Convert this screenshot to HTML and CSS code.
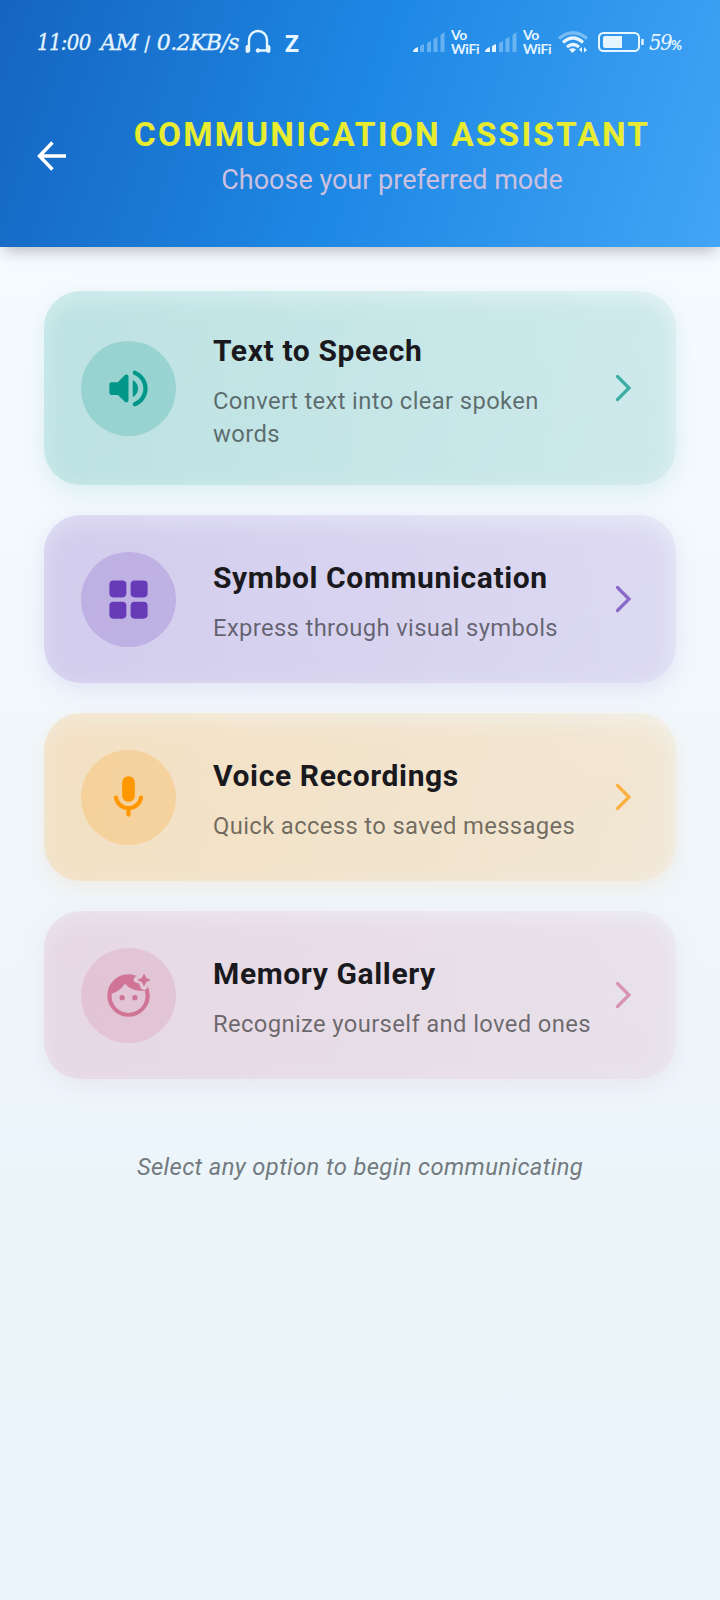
FILE: index.html
```html
<!DOCTYPE html>
<html lang="en">
<head>
<meta charset="utf-8">
<title>Communication Assistant</title>
<link rel="stylesheet" href="styles.css">
</head>
<body>
<header class="header">
  <div class="status">
    <span class="clock">11:00<span class="ampm">AM <i class="divider">|</i> 0.2KB/s</span></span>
    <svg class="headset" viewBox="0 0 26 26" width="26" height="26" fill="none" stroke="currentColor" stroke-width="2.400" stroke-linecap="round"><path d="M4 23V12a9 9 0 0 1 18 0v11M13 22.500h8"/><path d="M2.500 19v4M23.500 19v4" stroke-width="3.800"/><circle cx="13" cy="22.500" r="1.800" fill="currentColor" stroke-width="1"/></svg>
    <span class="zed">Z</span>
    <span class="spacer"></span>
    <svg class="signal" viewBox="0 0 32 22" width="32" height="22" fill="currentColor"><path d="M0 21q0-3 5-5v5z"/><g opacity=".35"><path d="M7 15l4-2v8H7zM14 12l4-2v11h-4zM20.500 8l4-2v15h-4zM27.500 4l4-3v20h-4z"/></g></svg>
    <span class="vowifi"><span>Vo</span><span>WiFi</span></span>
    <svg class="signal second" viewBox="0 0 32 22" width="32" height="22" fill="currentColor"><path d="M0 21q0-3 5-5v5zM7 15l4-2v8H7z"/><g opacity=".35"><path d="M14 12l4-2v11h-4zM20.500 8l4-2v15h-4zM27.500 4l4-3v20h-4z"/></g></svg>
    <span class="vowifi"><span>Vo</span><span>WiFi</span></span>
    <svg class="wifi" viewBox="0 0 32 24" width="32" height="24" fill="none" stroke="currentColor" stroke-width="3.200"><path d="M2 8.500Q16-3 30 8.500" opacity=".4"/><path d="M6 12.500Q16 3.500 26 12.500M10 17q6-5 12 0"/><path d="M12 19.500q4-2.500 7 0L15.500 23z" fill="currentColor" stroke="none"/><path d="M25 17v5.500l-3-3zM27 22.500V17l3 3z" fill="currentColor" stroke="none"/></svg>
    <svg class="battery" viewBox="0 0 46 20" width="46" height="20" fill="none" stroke="currentColor" stroke-width="2"><rect x="1" y="1" width="40" height="18" rx="4.500"/><path d="M7 4h17v12H7a2 2 0 0 1-2-2V6a2 2 0 0 1 2-2z" fill="currentColor" stroke="none"/><path d="M44.500 7v6" stroke-width="2.500"/></svg>
    <span class="level">59<small>%</small></span>
  </div>
  <div class="bar">
    <svg class="back" viewBox="0 0 30 30" width="30" height="30" fill="none" stroke="currentColor" stroke-width="3.400"><path d="M29 15H3M15.500 1.500L2.500 15l13 13.500"/></svg>
    <div class="heading">
      <h1>COMMUNICATION ASSISTANT</h1>
      <p>Choose your preferred mode</p>
    </div>
  </div>
</header>
<main class="content">
  <section class="card teal">
    <div class="badge"><svg viewBox="0 0 24 24" width="51" height="51" fill="currentColor"><path d="M3 10v4c0 .55.45 1 1 1h3l3.290 3.290c.63.63 1.710.18 1.710-.71V6.410c0-.89-1.080-1.340-1.710-.71L7 9H4c-.55 0-1 .45-1 1zm13.500 2c0-1.770-1.020-3.290-2.500-4.030v8.050c1.480-.73 2.500-2.250 2.500-4.020zM14 4.450v.2c0 .38.25.71.6.85C17.180 6.530 19 9.060 19 12s-1.820 5.470-4.400 6.500c-.36.14-.6.47-.6.85v.2c0 .63.63 1.070 1.210.85C18.600 19.110 21 15.840 21 12s-2.400-7.110-5.790-8.400c-.58-.23-1.210.22-1.210.85z"/></svg></div>
    <div class="text"><h2>Text to Speech</h2><p>Convert text into clear spoken words</p></div>
    <svg class="chevron" viewBox="0 0 17 28" width="17" height="28"><path d="M2.500 2.500L14 14 2.500 25.500"/></svg>
  </section>
  <section class="card purple">
    <div class="badge"><svg viewBox="0 0 24 24" width="51" height="51" fill="currentColor"><rect x="3" y="3" width="8" height="8" rx="1.900"/><rect x="13" y="3" width="8" height="8" rx="1.900"/><rect x="3" y="13" width="8" height="8" rx="1.900"/><rect x="13" y="13" width="8" height="8" rx="1.900"/></svg></div>
    <div class="text"><h2>Symbol Communication</h2><p>Express through visual symbols</p></div>
    <svg class="chevron" viewBox="0 0 17 28" width="17" height="28"><path d="M2.500 2.500L14 14 2.500 25.500"/></svg>
  </section>
  <section class="card orange">
    <div class="badge"><svg viewBox="0 0 24 24" width="51" height="51" fill="currentColor"><path d="M12 14c1.660 0 3-1.340 3-3V5c0-1.660-1.340-3-3-3S9 3.340 9 5v6c0 1.660 1.340 3 3 3zm5.910-3c-.49 0-.9.36-.98.85C16.520 14.200 14.470 16 12 16s-4.520-1.800-4.930-4.150c-.08-.49-.49-.85-.98-.85-.61 0-1.090.54-1 1.140.49 3 2.890 5.350 5.910 5.780V20c0 .55.45 1 1 1s1-.45 1-1v-2.080c3.020-.43 5.420-2.780 5.910-5.780.1-.6-.39-1.140-1-1.140z"/></svg></div>
    <div class="text"><h2>Voice Recordings</h2><p>Quick access to saved messages</p></div>
    <svg class="chevron" viewBox="0 0 17 28" width="17" height="28"><path d="M2.500 2.500L14 14 2.500 25.500"/></svg>
  </section>
  <section class="card pink">
    <div class="badge"><svg viewBox="0 0 24 24" width="51" height="51" fill="currentColor">
      <mask id="sparkle-gap"><path d="M0 0h24v24H0z" fill="#fff"/><path d="M19.300 0l1.500 3 4 1.700-3.200 1.500-.7 2.300-1.500 1.200-1.600-1-.8-2.300-2.200-.8-.5-1.200.8-1.200 2-.9z" fill="#000"/></mask>
      <path mask="url(#sparkle-gap)" fill-rule="evenodd" d="M12 2a10 10 0 1 0 0 20 10 10 0 0 0 0-20zM4.100 11.200C7 10.300 9.100 8.500 10.300 6.400 12.300 8.800 15.200 10 19.700 9.900A8 8 0 1 1 4.100 11.200z"/>
      <circle cx="9" cy="13" r="1.250"/><circle cx="15" cy="13" r="1.250"/>
      <path stroke="currentColor" stroke-width=".4" stroke-linejoin="round" d="M19.300 2l.9 1.900 1.900.8-1.900.8-.9 1.900-.9-1.900-1.900-.8 1.900-.8z"/></svg></div>
    <div class="text"><h2>Memory Gallery</h2><p>Recognize yourself and loved ones</p></div>
    <svg class="chevron" viewBox="0 0 17 28" width="17" height="28"><path d="M2.500 2.500L14 14 2.500 25.500"/></svg>
  </section>
  <p class="hint">Select any option to begin communicating</p>
</main>
</body>
</html>
```
FILE: styles.css
```css
* { box-sizing: border-box; margin: 0; }
body {
  min-height: 1600px;
  font-family: Roboto, sans-serif;
  background: linear-gradient(#f8fcff, #edf5fb 68%, #e8f4f8 80%, #e8f4f9);
  overflow: hidden;
}
.header {
  position: relative;
  height: 247px;
  color: #fff;
  background: linear-gradient(108.9deg, #1565c0, #1e88e5 50%, #42a5f5);
  box-shadow: 0 8px 14px -4px rgba(0, 0, 0, .25);
}
.status {
  display: flex;
  align-items: center;
  height: 84px;
  padding: 0 36px 0 37px;
  color: #e6f5ff;
}
.clock, .level { font-family: "DejaVu Serif Condensed", "DejaVu Serif", serif; font-style: italic; white-space: nowrap; }
.clock { width: 208px; font-size: 22px; letter-spacing: -.7px; -webkit-text-stroke: .3px; }
.ampm { margin-left: 10px; font-family: "DejaVu Serif", serif; letter-spacing: -.6px; }
.divider { display: inline-block; font: 20px Roboto, sans-serif; transform: skewX(-14deg); margin: 0 1px; }
.headset { margin-top: -2px; }
.zed { margin-left: 14px; font: 700 24px "Open Sans", sans-serif; }
.spacer { flex: 1; }
.vowifi {
  display: flex;
  flex-direction: column;
  width: 29px;
  margin-left: 6px;
  font: 700 14px/14px Lato, sans-serif;
  letter-spacing: -.3px;
  white-space: nowrap;
}
.second { margin-left: 5px; }
.wifi { margin-left: 5px; }
.battery { margin-left: 9px; }
.level { width: 35px; margin-left: 5px; font-size: 22px; letter-spacing: -1.500px; }
.level small { font: 700 13px Lato, sans-serif; letter-spacing: 0; }
.bar { display: flex; align-items: flex-start; padding: 0 36px 0 37px; }
.back { flex: none; margin-top: 57px; }
.heading { flex: 1; margin-top: 31px; text-align: center; padding-left: 33px; }
.heading h1 { font-size: 33.500px; line-height: 40px; font-weight: 700; letter-spacing: 2.150px; color: #e8ec30; white-space: nowrap; }
.heading p { margin-top: 7px; font-size: 27px; line-height: 36px; color: #ccc0e0; }
.content { display: flex; flex-direction: column; gap: 30px; padding: 44px; }
.card {
  position: relative;
  display: flex;
  align-items: center;
  height: 168px;
  padding: 0 44.500px 0 37px;
  border-radius: 37px;
  background: linear-gradient(105deg, rgb(var(--tone) / .14), rgb(var(--tone) / .06));
}
/* Soft glow that also tints the translucent card face */
.card::before {
  content: "";
  position: absolute;
  inset: 0;
  z-index: -1;
  border-radius: 37px;
  background: rgb(var(--tone) / .1);
  transform: translateY(7px);
  filter: blur(11px);
}
.teal { height: 194px; --tone: 0 150 136; }
.purple { --tone: 103 58 183; }
.orange { --tone: 255 152 0; }
.pink { --tone: 208 116 150; }
.badge {
  display: grid;
  place-items: center;
  flex: none;
  width: 95px;
  height: 95px;
  border-radius: 50%;
  color: rgb(var(--tone));
  background: rgb(var(--tone) / .2);
}
.text { flex: 1; margin-left: 37px; padding-top: 7px; }
.text h2 { font-size: 30px; line-height: 38px; font-weight: 700; letter-spacing: .62px; color: #1a1a1e; white-space: nowrap; }
.text p { width: 385px; margin-top: 15px; font-size: 23.800px; line-height: 33.300px; letter-spacing: .36px; color: rgb(0 0 0 / .54); }
.teal .text p { width: 345px; }
.chevron { flex: none; margin-left: auto; }
.chevron path { fill: none; stroke: rgb(var(--tone) / .7); stroke-width: 3.200; stroke-linecap: round; }
.hint { margin-top: 40px; text-align: center; font-size: 23.800px; line-height: 36px; font-style: italic; letter-spacing: .37px; color: #737b80; }
```
